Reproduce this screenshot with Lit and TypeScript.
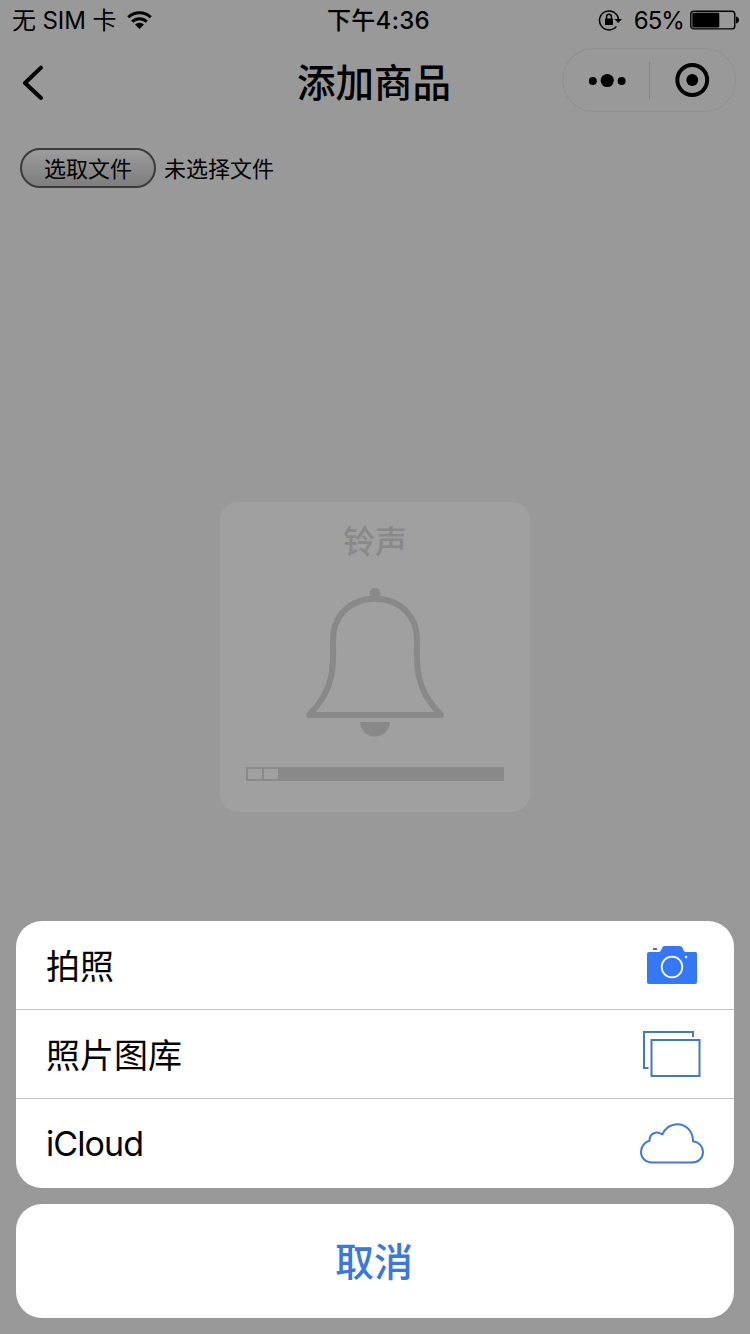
import { LitElement, html, css, svg } from 'lit';
import { customElement, property } from 'lit/decorators.js';

const menuIcons: Record<string, unknown> = {
  camera: svg`
    <path fill="#3478f6" d="M10 12H19.5C21.5 12 22 10.5 22.8 8.6C23.6 6.8 24.3 6 26 6H40.5C42.2 6 43 6.8 43.8 8.6C44.6 10.5 45 12 47 12H56.5Q58 12 58 13.5V42Q58 44 56 44H10Q8 44 8 42V14Q8 12 10 12Z"/>
    <rect x="14" y="8" width="4" height="2" fill="#3f70b8"/>
    <circle cx="33" cy="27" r="10.3" fill="none" stroke="#fff" stroke-width="1.8"/>
    <circle cx="47" cy="17" r="1.2" fill="#fff"/>
  `,
  photos: svg`
    <g fill="none" stroke="#4379bd" stroke-width="2">
      <path d="M9.5 39H5V3H54V8"/>
      <rect x="12.5" y="11" width="48" height="36"/>
    </g>
  `,
  cloud: svg`
    <path fill="none" stroke="#4379cf" stroke-width="2" stroke-linejoin="round"
      d="M13 43.5C6 43.5 2 38.5 2 33C2 27 6 22.8 10.5 21.8C10.5 14 17.5 11.500 23.4 15.500C26 9 32 5.2 38 5.2C47 5.2 54 12 54 22.3C60 23 64 27.500 64 33C64 39 59.500 43.500 53 43.500Z"/>
  `
};

@customElement('status-bar')
class StatusBar extends LitElement {
  static styles = css`
    :host {
      display: grid;
      grid-template-columns: 1fr auto 1fr;
      align-items: center;
      height: 40px;
      padding: 0 11px 0 12px;
      box-sizing: border-box;
      font-size: 24px;
      line-height: 38px;
    }

    span {
      padding-top: 2px;
    }

    .side {
      display: flex;
      align-items: center;
    }

    .side.right {
      justify-content: flex-end;
    }

    .carrier {
      letter-spacing: -0.1px;
    }

    .wifi {
      margin-left: 11px;
    }

    .time {
      padding-left: 6px;
      font-weight: 500;
      letter-spacing: 0.3px;
    }

    .lock {
      margin-right: 12px;
    }

    .percent {
      letter-spacing: -0.9px;
    }

    .battery {
      margin-left: 6px;
    }
  `;

  render () {
    return html`
      <div class="side">
        <span class="carrier">无 SIM 卡</span>
        <svg class="wifi" width="25" height="20" viewBox="0 0 25 20">
          <g fill="none" stroke="#000" stroke-width="3">
            <path d="M1.3 7.2A16 16 0 0 1 23.7 7.2"/>
            <path d="M5.2 11.6A10.5 10.5 0 0 1 19.8 11.6"/>
          </g>
          <path d="M12.5 19L8 14.6A6.4 6.4 0 0 1 17 14.6Z"/>
        </svg>
      </div>
      <span class="time">下午4:36</span>
      <div class="side right">
        <svg class="lock" width="24" height="22" viewBox="0 0 24 22">
          <path fill="none" stroke="#000" stroke-width="1.5" d="M18.4 17.4A9.500 9.500 0 1 1 20.400 10"/>
          <path d="M16.400 10H24L20.200 14Z"/>
          <rect x="7" y="9.500" width="8" height="6.600" rx="0.600"/>
          <path fill="none" stroke="#000" stroke-width="1.4" d="M8.600 10V7.600A2.400 2.400 0 0 1 13.400 7.600V10"/>
        </svg>
        <span class="percent">65%</span>
        <svg class="battery" width="49" height="20" viewBox="0 0 49 20">
          <rect x="0.8" y="1.3" width="44" height="17.6" rx="3" fill="none" stroke="#000" stroke-width="1.4"/>
          <rect x="2.3" y="2.8" width="27" height="14.6" rx="1"/>
          <path d="M46 6.6Q49 7.4 49 10.1T46 13.6Z"/>
        </svg>
      </div>
    `;
  }
}

@customElement('nav-bar')
class NavBar extends LitElement {
  static styles = css`
    :host {
      display: grid;
      grid-template-columns: 1fr auto 1fr;
      align-items: center;
      height: 88px;
      padding: 0 14px 8px;
      box-sizing: border-box;
    }

    .title {
      padding: 5px 2px 0 0;
      font-size: 38.5px;
      font-weight: 500;
      line-height: 64px;
    }

    .back {
      margin: 6px 0 0 8px;
    }

    .capsule {
      justify-self: end;
      display: flex;
      align-items: center;
      width: 174px;
      height: 64px;
      box-sizing: border-box;
      border: 1px solid #909090;
      border-radius: 32px;
    }

    .capsule svg {
      flex: 1;
      height: 62px;
    }

    .divider {
      width: 1px;
      height: 37px;
      background-color: #868686;
    }
  `;

  @property({ type: String }) heading = '';

  render () {
    return html`
      <svg class="back" width="22" height="36" viewBox="0 0 22 36">
        <path fill="none" stroke="#000" stroke-width="4" stroke-linecap="round" stroke-linejoin="round" d="M19 2.6L3 18L19 33"/>
      </svg>
      <span class="title">${this.heading}</span>
      <div class="capsule">
        <svg viewBox="0 0 86 62">
          <circle cx="30" cy="32" r="4"/>
          <circle cx="44.5" cy="31.5" r="6.6"/>
          <circle cx="59" cy="32" r="4"/>
        </svg>
        <div class="divider"></div>
        <svg viewBox="0 0 86 62">
          <circle cx="42.5" cy="31" r="15" fill="none" stroke="#000" stroke-width="4"/>
          <circle cx="42.5" cy="31" r="6"/>
        </svg>
      </div>
    `;
  }
}

@customElement('volume-hud')
class VolumeHud extends LitElement {
  static styles = css`
    :host {
      display: flex;
      flex-direction: column;
      align-items: center;
      width: 310px;
      height: 310px;
      box-sizing: border-box;
      padding-top: 18px;
      border-radius: 18px;
      background-color: #a0a0a0;
      color: #898989;
    }

    .label {
      font-size: 32px;
      font-weight: 500;
      line-height: 44px;
    }

    .bell {
      margin-top: 22px;
    }

    .track {
      display: flex;
      gap: 2px;
      width: 258px;
      height: 14px;
      box-sizing: border-box;
      margin-top: 29px;
      padding: 2px;
      background-color: #898989;
    }

    .step {
      width: 14px;
      background-color: #a0a0a0;
    }
  `;

  @property({ type: Number }) level = 2;

  render () {
    return html`
      <span class="label">铃声</span>
      <svg class="bell" width="140" height="152" viewBox="0 0 140 152">
        <circle cx="70" cy="7.5" r="5.5" fill="#898989"/>
        <path fill="none" stroke="#898989" stroke-width="6" stroke-linejoin="round"
          d="M70 12.7C45 12.7 28 30 28 54C28 66 29 78 26 91C23 106 15 118 4 129H136C125 118 117 106 114 91C111 78 112 66 112 54C112 30 95 12.7 70 12.7Z"/>
        <path fill="#898989" d="M54.8 136H85.2C84 145 78 150.5 70 150.5S56 145 54.8 136Z"/>
      </svg>
      <div class="track">
        ${Array.from({ length: this.level }, () => html`<div class="step"></div>`)}
      </div>
    `;
  }
}

@customElement('action-sheet')
class ActionSheet extends LitElement {
  static styles = css`
    :host {
      display: flex;
      flex-direction: column;
      gap: 16px;
      padding: 0 16px 16px;
    }

    .group,
    .cancel {
      border-radius: 26px;
      background-color: #fff;
    }

    .group {
      overflow: hidden;
    }

    .item {
      display: flex;
      align-items: center;
      justify-content: space-between;
      height: 89px;
      box-sizing: border-box;
      padding: 0 29px 0 30px;
      font-size: 34px;
      line-height: 50px;
    }

    .item:not(:last-child) {
      border-bottom: 1px solid #c4c4c4;
    }

    .item span {
      padding-top: 3px;
    }

    .item span:lang(en) {
      padding-top: 0;
      letter-spacing: -0.9px;
    }

    .cancel {
      height: 114px;
      border: none;
      padding: 0 2px 4px 0;
      font-family: inherit;
      font-size: 39px;
      font-weight: 500;
      color: #3b78dc;
    }
  `;

  @property({ attribute: false }) items: { label: string; lang: string; icon: string }[] = [];

  render () {
    return html`
      <div class="group">
        ${this.items.map(item => html`
          <div class="item">
            <span lang=${item.lang}>${item.label}</span>
            <svg width="66" height="50" viewBox="0 0 66 50">${menuIcons[item.icon]}</svg>
          </div>
        `)}
      </div>
      <button class="cancel">取消</button>
    `;
  }
}

@customElement('app-root')
class AppRoot extends LitElement {
  static styles = css`
    :host {
      display: flex;
      flex-direction: column;
      position: relative;
      height: 1334px;
      overflow: hidden;
      background-color: #999;
      color: #000;
      font-family: Inter, "Noto Sans CJK SC", sans-serif;
    }

    .file {
      display: flex;
      align-items: center;
      gap: 8px;
      margin: 20px 20px 0;
      font-size: 22px;
    }

    .file span {
      padding-bottom: 2px;
    }

    .choose {
      width: 136px;
      height: 40px;
      padding: 0 0 2px;
      border: 2px solid #3c3c3c;
      border-radius: 20px;
      background: linear-gradient(#9c9c9c, #7d7d7d);
      color: #000;
      font: inherit;
    }

    .hud {
      position: absolute;
      top: 502px;
      left: 220px;
    }

    .sheet {
      margin-top: auto;
    }
  `;

  private menu = [
    { label: '拍照', lang: 'zh', icon: 'camera' },
    { label: '照片图库', lang: 'zh', icon: 'photos' },
    { label: 'iCloud', lang: 'en', icon: 'cloud' }
  ];

  render () {
    return html`
      <status-bar></status-bar>
      <nav-bar heading="添加商品"></nav-bar>
      <div class="file">
        <button class="choose">选取文件</button>
        <span>未选择文件</span>
      </div>
      <volume-hud class="hud"></volume-hud>
      <action-sheet class="sheet" .items=${this.menu}></action-sheet>
    `;
  }
}
